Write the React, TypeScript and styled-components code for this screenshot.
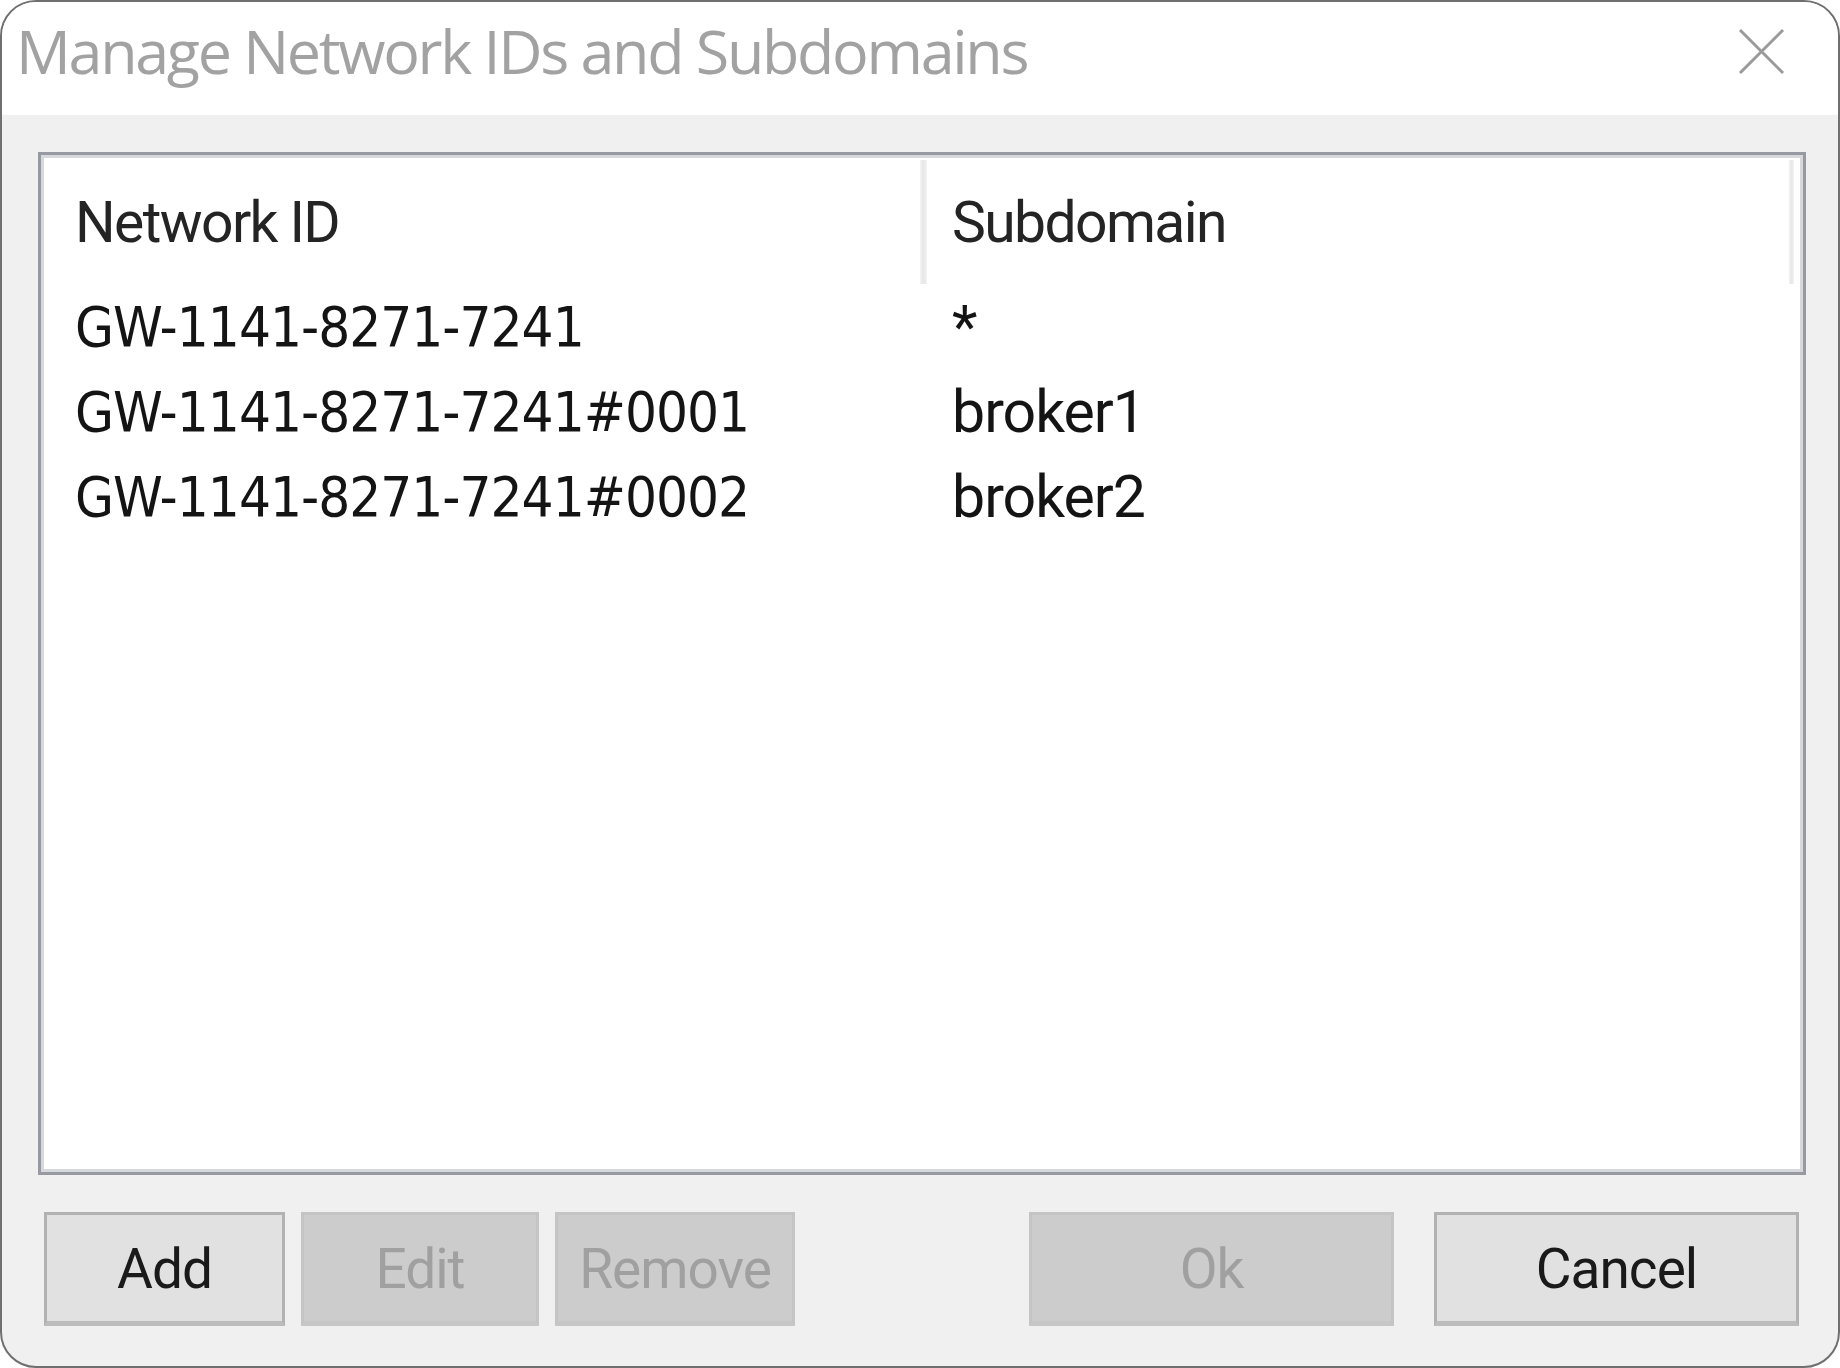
import React from "react";
import styled, { createGlobalStyle } from "styled-components";

const Global = createGlobalStyle`
  html, body { margin: 0; padding: 0; background: #ffffff; }
  body { width: 1840px; height: 1368px; overflow: hidden; }
  * { box-sizing: border-box; }
`;

const Window = styled.div`
  width: 1840px;
  height: 1368px;
  border: 2px solid #6f6f6f;
  border-radius: 36px;
  overflow: hidden;
  display: flex;
  flex-direction: column;
  background: #f0f0f0;
`;

const TitleBar = styled.div`
  height: 113px;
  flex: none;
  background: #ffffff;
  display: flex;
  align-items: center;
  justify-content: space-between;
  padding: 0 53px 16px 14px;
`;

const Title = styled.div`
  font-family: "Open Sans", "Noto Sans", sans-serif;
  font-size: 61px;
  letter-spacing: -2.3px;
  line-height: 1;
  color: #a2a2a2;
  white-space: nowrap;
`;

const CloseIcon = styled.svg`
  width: 47px;
  height: 47px;
  flex: none;
  display: block;
  margin-top: 2px;
`;

const Body = styled.div`
  flex: 1;
  display: flex;
  flex-direction: column;
  padding: 37px 32px 40px 36px;
  gap: 37px;
`;

const ListBox = styled.div`
  flex: 1;
  background: #ffffff;
  border: 3px solid #979aa0;
  box-shadow: inset 0 0 0 3px #d6d8db;
  padding-top: 5px;
  display: flex;
  flex-direction: column;
`;

const HeaderRow = styled.div`
  display: flex;
  height: 124px;
  align-items: stretch;
`;

const HeaderCell = styled.div<{ $w: number; $pad: number }>`
  width: ${(p) => p.$w}px;
  flex: none;
  padding-left: ${(p) => p.$pad}px;
  display: flex;
  align-items: center;
  font-family: "Roboto", "Noto Sans", sans-serif;
  font-size: 57px;
  letter-spacing: -1.6px;
  color: #242424;
  white-space: nowrap;
`;

const ColSeparator = styled.div<{ $w: number }>`
  width: ${(p) => p.$w}px;
  flex: none;
  background: linear-gradient(to right, #f4f4f4, #e8e8e8 40%, #e8e8e8 60%, #f4f4f4);
`;

const Row = styled.div`
  display: flex;
  height: 85px;
  align-items: center;
`;

const Cell = styled.div<{ $w: number; $pad: number; $narrow?: boolean }>`
  width: ${(p) => p.$w}px;
  flex: none;
  padding-left: ${(p) => p.$pad}px;
  font-family: ${(p) =>
    p.$narrow
      ? `"Roboto", "Noto Sans", sans-serif`
      : `"DejaVu Sans Condensed", "DejaVu Sans", sans-serif`};
  font-stretch: ${(p) => (p.$narrow ? "normal" : "condensed")};
  font-size: ${(p) => (p.$narrow ? 59 : 56)}px;
  letter-spacing: -1px;
  color: #141414;
  white-space: nowrap;
  line-height: 1;
`;

const ButtonRow = styled.div`
  display: flex;
  height: 114px;
  padding: 0 7px 0 6px;
  align-items: stretch;
`;

const Group = styled.div<{ $gap: number }>`
  display: flex;
  gap: ${(p) => p.$gap}px;
`;

const Spacer = styled.div`
  flex: 1;
`;

const Button = styled.div<{ $w: number; $disabled?: boolean }>`
  width: ${(p) => p.$w}px;
  display: flex;
  align-items: center;
  justify-content: center;
  font-family: "Roboto", "Noto Sans", sans-serif;
  font-size: 55px;
  letter-spacing: -1px;
  padding-top: 2px;
  background: ${(p) => (p.$disabled ? "#cccccc" : "#e1e1e1")};
  border: 3px solid ${(p) => (p.$disabled ? "#c4c4c4" : "#b2b2b2")};
  border-bottom-width: 5px;
  border-bottom-color: ${(p) => (p.$disabled ? "#c6c6c6" : "#bcbcbc")};
  color: ${(p) => (p.$disabled ? "#a0a0a0" : "#1a1a1a")};
`;

const rows = [
  { id: "GW-1141-8271-7241", sub: "*" },
  { id: "GW-1141-8271-7241#0001", sub: "broker1" },
  { id: "GW-1141-8271-7241#0002", sub: "broker2" },
];

export default function App() {
  return (
    <>
      <Global />
      <Window>
        <TitleBar>
          <Title>Manage Network IDs and Subdomains</Title>
          <CloseIcon viewBox="0 0 47 47">
            <path d="M2 2 L45 45 M45 2 L2 45" stroke="#9a9a9a" strokeWidth="3" fill="none" />
          </CloseIcon>
        </TitleBar>
        <Body>
          <ListBox>
            <HeaderRow>
              <HeaderCell $w={879} $pad={34}>Network ID</HeaderCell>
              <ColSeparator $w={7} />
              <HeaderCell $w={862} $pad={25}>Subdomain</HeaderCell>
              <ColSeparator $w={5} />
            </HeaderRow>
            {rows.map((r) => (
              <Row key={r.id}>
                <Cell $w={886} $pad={34}>{r.id}</Cell>
                <Cell $w={856} $pad={25} $narrow>{r.sub}</Cell>
              </Row>
            ))}
          </ListBox>
          <ButtonRow>
            <Group $gap={16}>
              <Button $w={241}>Add</Button>
              <Button $w={238} $disabled>Edit</Button>
              <Button $w={240} $disabled>Remove</Button>
            </Group>
            <Spacer />
            <Group $gap={40}>
              <Button $w={365} $disabled>Ok</Button>
              <Button $w={365}>Cancel</Button>
            </Group>
          </ButtonRow>
        </Body>
      </Window>
    </>
  );
}
